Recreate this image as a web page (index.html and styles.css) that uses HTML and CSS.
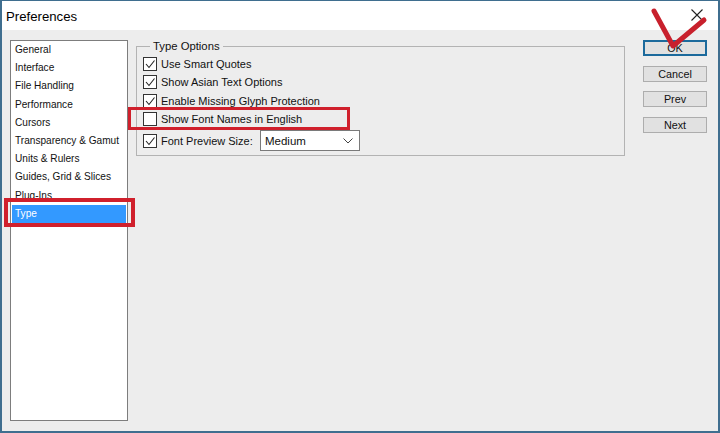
FILE: index.html
```html
<!DOCTYPE html>
<html>
<head>
<meta charset="utf-8">
<link rel="stylesheet" href="styles.css">
</head>
<body>
<div class="window">
  <div class="titlebar">
    <span class="title">Preferences</span>
    <svg class="close" width="14" height="14" viewBox="0 0 14 14"><path d="M1.5 1.5 L12.5 12.5 M12.5 1.5 L1.5 12.5" stroke="#222" stroke-width="1.1" fill="none"/></svg>
  </div>
  <div class="content">
    <ul class="list">
      <li>General</li>
      <li>Interface</li>
      <li>File Handling</li>
      <li>Performance</li>
      <li>Cursors</li>
      <li>Transparency &amp; Gamut</li>
      <li>Units &amp; Rulers</li>
      <li>Guides, Grid &amp; Slices</li>
      <li>Plug-Ins</li>
      <li class="selected">Type</li>
    </ul>
    <fieldset class="group">
      <legend>Type Options</legend>
      <div class="row"><span class="box checked"><svg width="12" height="12" viewBox="0 0 12 12"><path d="M2 6 L5 9.5 L10.5 2.5" stroke="#222" stroke-width="1.1" fill="none"/></svg></span>Use Smart Quotes</div>
      <div class="row"><span class="box checked"><svg width="12" height="12" viewBox="0 0 12 12"><path d="M2 6 L5 9.5 L10.5 2.5" stroke="#222" stroke-width="1.1" fill="none"/></svg></span>Show Asian Text Options</div>
      <div class="row"><span class="box checked"><svg width="12" height="12" viewBox="0 0 12 12"><path d="M2 6 L5 9.5 L10.5 2.5" stroke="#222" stroke-width="1.1" fill="none"/></svg></span>Enable Missing Glyph Protection</div>
      <div class="row"><span class="box"></span>Show Font Names in English</div>
      <div class="row select-row"><span class="box checked"><svg width="12" height="12" viewBox="0 0 12 12"><path d="M2 6 L5 9.5 L10.5 2.5" stroke="#222" stroke-width="1.1" fill="none"/></svg></span><span class="label">Font Preview Size:</span>
        <div class="select"><span>Medium</span><svg width="10" height="6" viewBox="0 0 10 6"><path d="M0.5 0.5 L5 5 L9.5 0.5" stroke="#444" stroke-width="1" fill="none"/></svg></div>
      </div>
    </fieldset>
    <div class="buttons">
      <div class="btn default">OK</div>
      <div class="btn">Cancel</div>
      <div class="btn">Prev</div>
      <div class="btn">Next</div>
    </div>
  </div>
</div>
<div class="mark mark-type"></div>
<div class="mark mark-font"></div>
<svg class="check" width="720" height="433" viewBox="0 0 720 433"><polyline points="654,11 673,46 704,20" stroke="#c8202c" stroke-width="5" fill="none" stroke-linecap="round" stroke-linejoin="round"/></svg>
</body>
</html>
```
FILE: styles.css
```css
html, body {
  margin: 0;
  padding: 0;
  background: #ffffff;
}
body {
  width: 720px;
  height: 433px;
  overflow: hidden;
  font-family: "Liberation Sans", Arial, sans-serif;
  color: #111;
}
.window {
  width: 720px;
  height: 433px;
  box-sizing: border-box;
  border: 2px solid #3f6e8f;
  border-top-width: 1px;
  display: flex;
  flex-direction: column;
}
.titlebar {
  height: 29px;
  background: #ffffff;
  display: flex;
  align-items: center;
  justify-content: space-between;
  padding: 0 14px 0 4px;
  flex: none;
}
.title {
  font-size: 13.2px;
  color: #000;
  margin-top: 1px;
}
.close {
  margin-top: -2px;
}
.content {
  flex: 1;
  background: #ededed;
  display: flex;
  align-items: flex-start;
  padding: 10px 11px 10px 8px;
}
.list {
  list-style: none;
  margin: 0;
  padding: 0;
  width: 118px;
  height: 381px;
  box-sizing: border-box;
  border: 1px solid #7d7d7d;
  background: #ffffff;
  flex: none;
}
.list li {
  height: 18.2px;
  line-height: 18.2px;
  font-size: 10.1px;
  margin: 0 1px;
  padding-left: 3px;
  color: #111;
  white-space: nowrap;
}
.list li.selected {
  background: #3399ff;
  color: #ffffff;
}
.group {
  margin: -2px 0 0 8px;
  width: 489px;
  box-sizing: border-box;
  border: 1px solid #b3b3b3;
  padding: 1px 6px 4px 6px;
  min-inline-size: 0;
  flex: none;
}
.group legend {
  font-size: 11.3px;
  line-height: 16px;
  padding: 0 3px;
  margin-left: 7px;
  color: #111;
}
.row {
  height: 18.3px;
  display: flex;
  align-items: center;
  font-size: 11px;
  white-space: nowrap;
}
.box {
  width: 14px;
  height: 14px;
  box-sizing: border-box;
  border: 1px solid #333;
  background: #fff;
  margin-right: 4px;
  display: flex;
  align-items: center;
  justify-content: center;
  flex: none;
}
.select-row {
  height: 21px;
  margin-top: 2px;
}
.label {
  width: 99px;
}
.select {
  width: 100px;
  height: 21px;
  box-sizing: border-box;
  border: 1px solid #7a7a7a;
  background: #fff;
  display: flex;
  align-items: center;
  justify-content: space-between;
  padding: 0 6px 0 4px;
  font-size: 11.5px;
}
.buttons {
  margin-left: 18px;
  display: flex;
  flex-direction: column;
  gap: 9.7px;
  width: 64px;
  flex: none;
}
.btn {
  height: 16px;
  box-sizing: border-box;
  border: 1px solid #adadad;
  background: #e1e1e1;
  font-size: 10.8px;
  line-height: 14px;
  text-align: center;
  color: #111;
}
.btn.default {
  border: 2px solid #1c6a9c;
  line-height: 12px;
}
.mark {
  position: absolute;
  box-sizing: border-box;
  border: 4px solid #d0202c;
}
.mark-type {
  left: 4px;
  top: 198px;
  width: 131px;
  height: 29px;
}
.mark-font {
  left: 128px;
  top: 107px;
  width: 222px;
  height: 23px;
  border-width: 3px;
}
.check {
  position: absolute;
  left: 0;
  top: 0;
  pointer-events: none;
}
```
